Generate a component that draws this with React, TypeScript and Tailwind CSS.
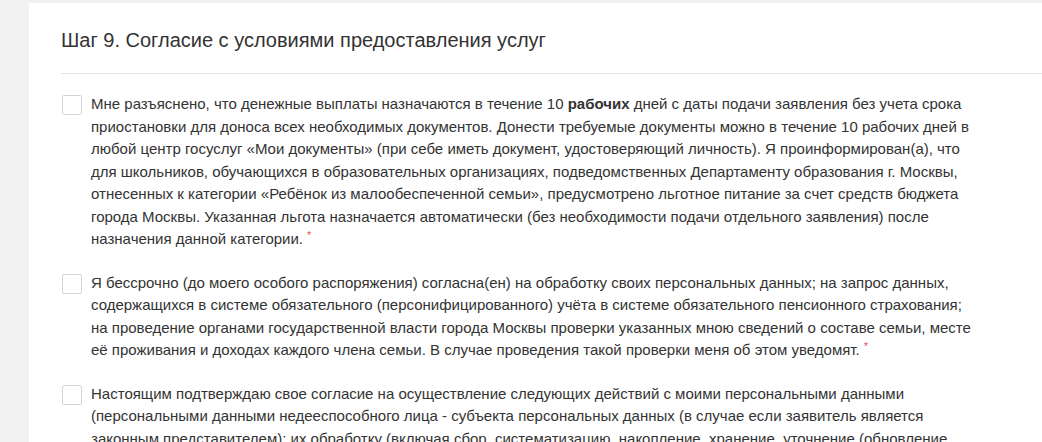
import React from 'react';

const Req = () => <sup className="ml-1 text-[11px] text-[#e0524c]">*</sup>;

type ItemProps = { lines: React.ReactNode[]; required?: boolean };

const ConsentItem = ({ lines, required }: ItemProps) => (
  <label className="flex items-start gap-[9px]">
    <span className="mt-[2px] ml-px h-[20px] w-[20px] shrink-0 rounded-[2px] border border-[#d4d4d4] bg-white" />
    <span className="text-[15px] leading-[22.5px] text-[#333]">
      {lines.map((l, i) => (
        <span key={i} className="block whitespace-nowrap">
          {l}
          {required && i === lines.length - 1 ? <Req /> : null}
        </span>
      ))}
    </span>
  </label>
);

export default function App() {
  return (
    <div className="min-h-screen overflow-hidden bg-[#f1f1f1] pl-[29px] pt-[3px] font-['Liberation_Sans',Arial,sans-serif]">
      <div className="min-h-[439px] w-[1100px] bg-white pl-8">
        <h2 className="pt-[25px] pb-[21px] text-[20px] leading-6 text-[#333]">
          Шаг 9. Согласие с условиями предоставления услуг
        </h2>
        <div className="border-t border-[#e3e3e3]" />
        <div className="flex flex-col gap-[21px] pt-[19px]">
          <ConsentItem
            required
            lines={[
              <>
                Мне разъяснено, что денежные выплаты назначаются в течение 10 <b>рабочих</b> дней с даты подачи заявления без учета срока
              </>,
              'приостановки для доноса всех необходимых документов. Донести требуемые документы можно в течение 10 рабочих дней в',
              'любой центр госуслуг «Мои документы» (при себе иметь документ, удостоверяющий личность). Я проинформирован(а), что',
              'для школьников, обучающихся в образовательных организациях, подведомственных Департаменту образования г. Москвы,',
              'отнесенных к категории «Ребёнок из малообеспеченной семьи», предусмотрено льготное питание за счет средств бюджета',
              'города Москвы. Указанная льгота назначается автоматически (без необходимости подачи отдельного заявления) после',
              'назначения данной категории.',
            ]}
          />
          <ConsentItem
            required
            lines={[
              'Я бессрочно (до моего особого распоряжения) согласна(ен) на обработку своих персональных данных; на запрос данных,',
              'содержащихся в системе обязательного (персонифицированного) учёта в системе обязательного пенсионного страхования;',
              'на проведение органами государственной власти города Москвы проверки указанных мною сведений о составе семьи, месте',
              'её проживания и доходах каждого члена семьи. В случае проведения такой проверки меня об этом уведомят.',
            ]}
          />
          <ConsentItem
            lines={[
              'Настоящим подтверждаю свое согласие на осуществление следующих действий с моими персональными данными',
              '(персональными данными недееспособного лица - субъекта персональных данных (в случае если заявитель является',
              'законным представителем): их обработку (включая сбор, систематизацию, накопление, хранение, уточнение (обновление,',
            ]}
          />
        </div>
      </div>
    </div>
  );
}
